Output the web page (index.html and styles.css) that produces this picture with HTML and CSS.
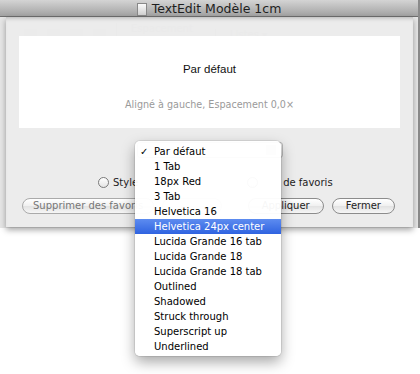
FILE: index.html
```html
<!DOCTYPE html>
<html>
<head>
    <title>TextEdit Modèle 1cm</title>
    <link rel="stylesheet" href="styles.css">
</head>
<body>
    <div class="window">
        <div class="titlebar">
            <span class="docicon"></span>
            <span class="title">TextEdit Modèle 1cm</span>
        </div>
        <div class="formatbar">
            <span class="fb-btn"></span>
            <span class="fb-btn"></span>
            <span class="fb-btn"></span>
            <span class="fb-btn"></span>
            <span class="fb-pop">Espacement ▾</span>
            <span class="fb-pop">Listes ▾</span>
        </div>

        <div class="sheet">
            <div class="preview">
                <div class="pv-name">Par défaut</div>
                <div class="pv-desc">Aligné à gauche, Espacement 0,0×</div>
            </div>
            <div class="popup-row">
                <div class="popup"><span class="arrows"></span></div>
            </div>
            <div class="options">
                <label class="radio"><span class="dot"></span>Style</label>
                <label class="radio second"><span class="dot"></span>de favoris</label>
            </div>
            <div class="buttons">
                <button class="btn dim">Supprimer des favoris</button>
                <button class="btn blank"></button>
                <span class="spacer"></span>
                <button class="btn">Appliquer</button>
                <button class="btn">Fermer</button>
            </div>
        </div>
    </div>

    <ul class="menu">
        <li class="checked">Par défaut</li>
        <li>1 Tab</li>
        <li>18px Red</li>
        <li>3 Tab</li>
        <li>Helvetica 16</li>
        <li class="active">Helvetica 24px center</li>
        <li>Lucida Grande 16 tab</li>
        <li>Lucida Grande 18</li>
        <li>Lucida Grande 18 tab</li>
        <li>Outlined</li>
        <li>Shadowed</li>
        <li>Struck through</li>
        <li>Superscript up</li>
        <li>Underlined</li>
    </ul>
</body>
</html>
```

FILE: styles.css
```css
body {
    margin: 0;
    width: 420px;
    height: 374px;
    background: #fff;
    font-family: "DejaVu Sans", Verdana, sans-serif;
    position: relative;
    overflow: hidden;
}
.window {
    position: relative;
    height: 228px;
    background: #e6e6e6;
    border-right: 2px solid #8a8a8a;
}
.titlebar {
    height: 16px;
    background: linear-gradient(#d4d4d4, #a2a2a2);
    border-bottom: 1px solid #6e6e6e;
    display: flex;
    align-items: center;
    justify-content: center;
    gap: 5px;
}
.docicon {
    width: 8px;
    height: 11px;
    background: linear-gradient(#fafafa, #d0d0d0);
    border: 1px solid #888;
    margin-top: 2px;
}
.title {
    font-size: 12.5px;
    color: #1e1e1e;
}
.formatbar {
    display: flex;
    align-items: center;
    gap: 10px;
    padding: 6px 24px;
    color: #d0d0d0;
    font-size: 10px;
}
.fb-btn {
    width: 13px;
    height: 10px;
    background: #dadada;
}
.fb-pop {
    padding: 0 14px;
    border-left: 1px solid #d6d6d6;
    width: 60px;
}
.sheet {
    position: absolute;
    top: 17px;
    left: 6px;
    right: 5px;
    height: 210px;
    background: rgba(236, 236, 236, 0.93);
    box-shadow: 0 3px 6px rgba(0, 0, 0, 0.35), inset 0 4px 4px -3px rgba(0, 0, 0, 0.25);
    display: flex;
    flex-direction: column;
    font-size: 10px;
    color: #222;
}
.preview {
    margin: 19px 13px 0;
    height: 92px;
    background: #fff;
    display: flex;
    flex-direction: column;
    align-items: center;
}
.pv-name {
    font-family: "Liberation Sans", Arial, sans-serif;
    font-size: 11.5px;
    color: #111;
    margin-top: 27px;
}
.pv-desc {
    font-size: 9.6px;
    color: #9a9a9a;
    margin-top: 24px;
}
.popup-row {
    display: flex;
    justify-content: center;
    margin-top: 14px;
}
.popup {
    width: 144px;
    height: 14px;
    border: 1px solid #b8b8b8;
    border-radius: 3px;
    background: #f4f4f4;
    position: relative;
}
.arrows {
    position: absolute;
    right: 6px;
    top: 2px;
    width: 10px;
    height: 10px;
    background: #cfcfcf;
}
.options {
    display: flex;
    margin: 17px 0 0 92px;
    height: 14px;
    align-items: center;
}
.radio {
    display: flex;
    align-items: center;
    gap: 4px;
}
.radio.second {
    margin-left: 109px;
    gap: 25px;
}
.dot {
    width: 9px;
    height: 9px;
    border: 1px solid #7a7a7a;
    border-radius: 50%;
    background: linear-gradient(#fff, #e4e4e4);
}
.buttons {
    display: flex;
    align-items: center;
    gap: 8px;
    margin: 9px 18px 0 16px;
}
.spacer {
    flex: 1;
}
.btn {
    font-family: "DejaVu Sans", Verdana, sans-serif;
    font-size: 10px;
    color: #222;
    height: 16px;
    padding: 0 13px;
    border: 1px solid #8c8c8c;
    border-radius: 8px;
    background: linear-gradient(#ffffff, #f0f0f0 50%, #e2e2e2 51%, #f6f6f6);
    line-height: 14px;
}
.btn.dim {
    color: #777;
    border-color: #aaa;
    padding: 0 10px;
}
.btn.blank {
    width: 60px;
    border-color: #bbb;
}
.menu {
    position: absolute;
    top: 141px;
    left: 135px;
    width: 146px;
    margin: 0;
    padding: 3px 0 2px;
    list-style: none;
    background: rgba(255, 255, 255, 0.96);
    border-radius: 5px;
    box-shadow: 0 6px 14px rgba(0, 0, 0, 0.35), 0 0 0 1px rgba(0, 0, 0, 0.08);
    font-size: 10px;
    color: #000;
}
.menu li {
    height: 15px;
    line-height: 15px;
    padding-left: 19px;
    position: relative;
}
.menu .checked::before {
    content: "✓";
    position: absolute;
    left: 5px;
}
.menu .active {
    background: linear-gradient(#5d8cf0, #2f63e0);
    color: #fff;
}
```
